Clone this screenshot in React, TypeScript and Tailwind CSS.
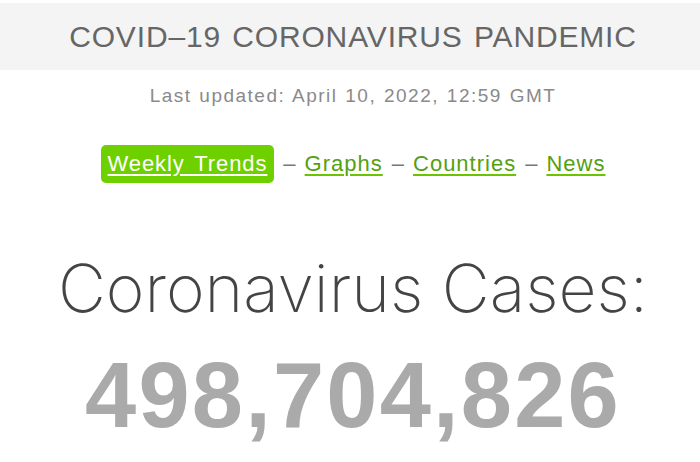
import React from 'react';

const links = ['Graphs', 'Countries', 'News'];

const App = () => {
  return (
    <div className="w-[700px] h-[462px] overflow-hidden bg-white font-['Liberation_Sans',Arial,sans-serif]">
      <div className="h-[3px] bg-white" />
      <div className="h-[67px] bg-[#f4f4f4] flex items-center justify-center pl-[6px]">
        <h1 className="text-[30px] text-[#666] leading-none tracking-[0.85px] [word-spacing:2px]">
          COVID–19 CORONAVIRUS PANDEMIC
        </h1>
      </div>
      <div className="pl-[6px]">
        <div className="mt-[16px] text-center text-[19px] text-[#8a8a8a] leading-none tracking-[1.5px] [word-spacing:1px]">
          Last updated: April 10, 2022, 12:59 GMT
        </div>
        <div className="mt-[40px] flex items-center justify-center gap-[9px] text-[22px] leading-none">
          <a
            href="#"
            className="bg-[#6fd000] text-white rounded-[5px] px-[7px] h-[38px] flex items-center underline underline-offset-[3px] tracking-[0.9px] [word-spacing:3px]"
          >
            Weekly Trends
          </a>
          {links.map((l) => (
            <React.Fragment key={l}>
              <span className="text-[#777]">–</span>
              <a href="#" className="text-[#55a00f] underline underline-offset-[3px] decoration-[#6cc400] tracking-[1px]">
                {l}
              </a>
            </React.Fragment>
          ))}
        </div>
        <div className="mt-[72px] text-center font-['Inter',sans-serif] font-extralight text-[66px] text-[#444] leading-none">
          Coronavirus Cases:
        </div>
        <div className="mt-[28px] text-center font-bold text-[92px] text-[#aaa] leading-none tracking-[2.2px]">
          498,704,826
        </div>
      </div>
    </div>
  );
};

export default App;
